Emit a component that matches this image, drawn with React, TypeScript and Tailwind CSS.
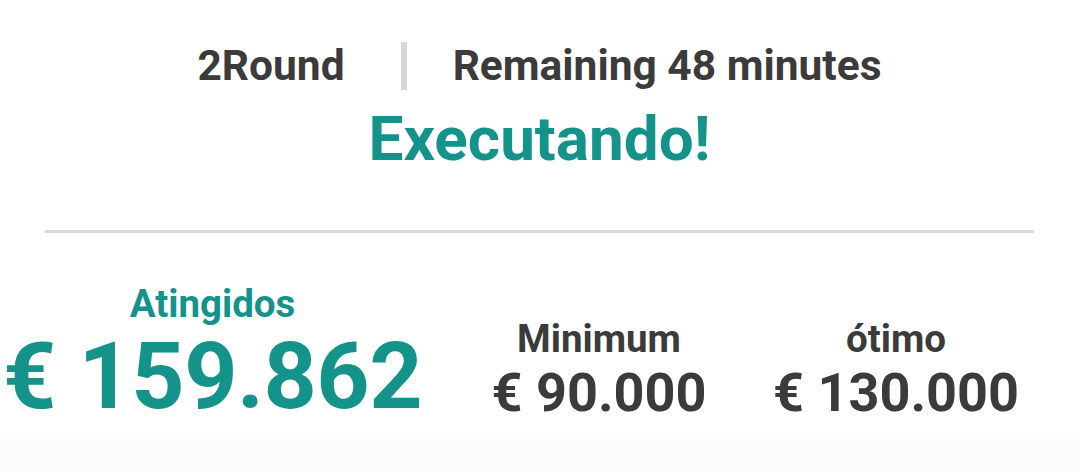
const font = { fontFamily: 'Roboto, "Noto Sans", sans-serif' };

type Stat = { label: string; value: string; width: string; gap: string };

const targets: Stat[] = [
    { label: 'Minimum', value: '€ 90.000', width: 'w-[212px]', gap: 'ml-[73px]' },
    { label: 'ótimo', value: '€ 130.000', width: 'w-[242px]', gap: 'ml-[70px]' },
];

export default function App() {
    return (
        <div className="h-[472px] w-[1079px] flex flex-col bg-white overflow-hidden" style={font}>
            {/* Round / remaining */}
            <div className="pt-[42px] flex items-center justify-center font-bold text-[#3b3b3b] text-[42.5px] leading-[48px] whitespace-nowrap">
                <span>2Round</span>
                <div className="w-[6px] h-[48px] bg-[#d8d8d8] ml-[56px] mr-[46px]" />
                <span>Remaining 48 minutes</span>
            </div>

            {/* Status */}
            <div className="mt-[14px] text-center font-bold text-[#14938b] text-[62px] leading-[70px]">
                Executando!
            </div>

            <div className="mt-[56px] mx-[45px] h-[3px] bg-[#d9d9d9]" />

            {/* Stats */}
            <div className="mt-[49px] pl-[5px] flex items-end font-bold whitespace-nowrap">
                <div className="w-[415px] flex flex-col items-center text-[#14938b]">
                    <div className="text-[38.5px] leading-[44px]">Atingidos</div>
                    <div className="mt-[3px] text-[93px] leading-[96px] tracking-[-0.5px]">€ 159.862</div>
                </div>
                {targets.map((t) => (
                    <div key={t.label} className={`${t.width} ${t.gap} flex flex-col items-center text-[#3b3b3b]`}>
                        <div className="text-[38.5px] leading-[44px]">{t.label}</div>
                        <div className="text-[54px] leading-[64px]">{t.value}</div>
                    </div>
                ))}
            </div>

            <div className="mt-[14px] flex-1 bg-[#fbfbfb]" />
        </div>
    );
}
